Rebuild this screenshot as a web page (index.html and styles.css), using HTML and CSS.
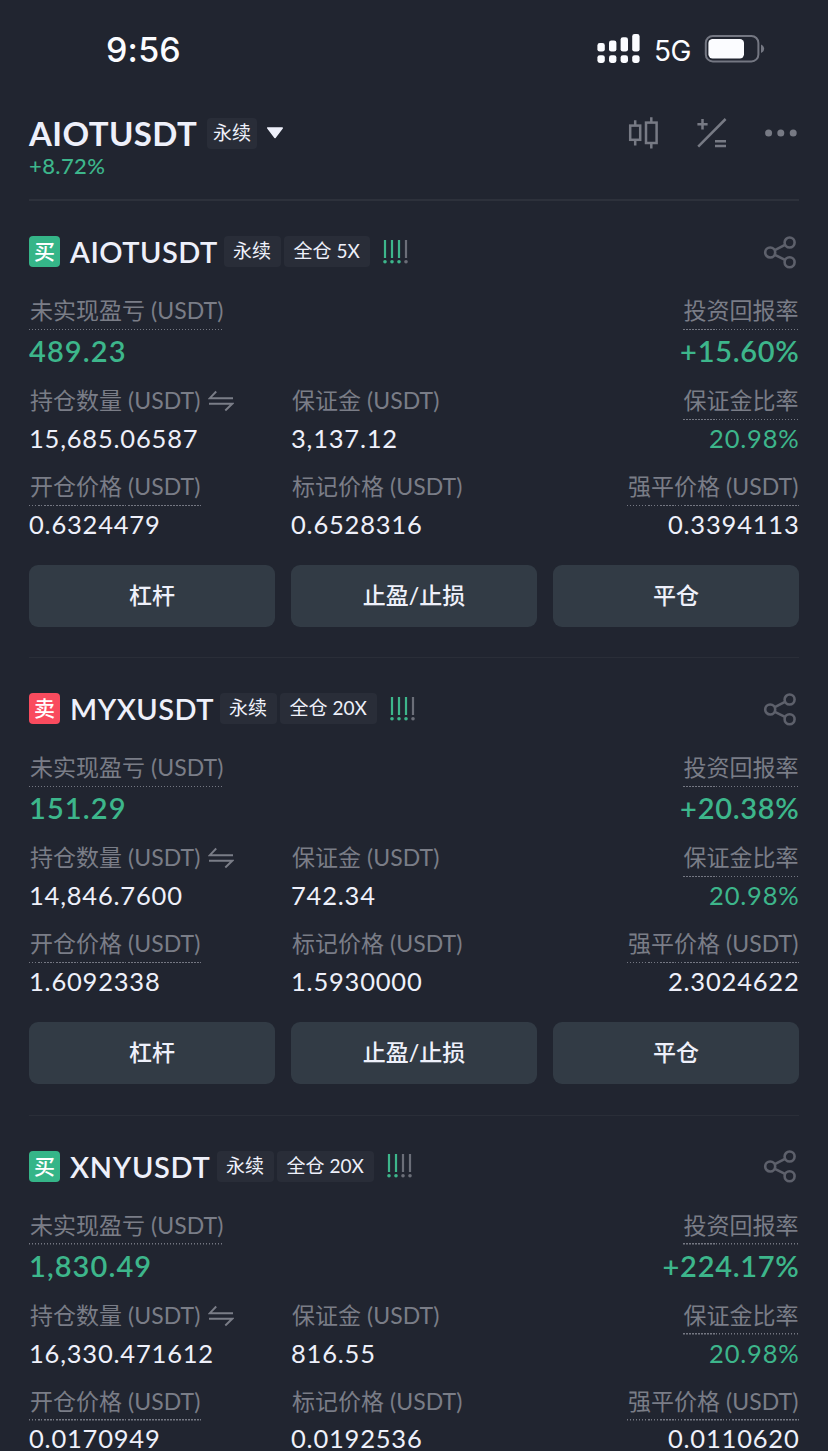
FILE: index.html
```html
<!DOCTYPE html>
<html lang="zh-CN">
<head>
<meta charset="utf-8">
<title>AIOTUSDT</title>
<link rel="stylesheet" href="styles.css">
</head>
<body>
<svg class="defs" width="0" height="0">
  <symbol id="share" viewBox="0 0 34 34">
    <g fill="none" stroke="currentColor" stroke-width="2.6"><circle cx="7.2" cy="17.5" r="5"/><circle cx="26.6" cy="7.5" r="5"/><circle cx="26.6" cy="27.2" r="5"/><path d="M11.8 15.1 22 9.8M11.8 19.8 22 24.9"/></g>
  </symbol>
  <symbol id="swap" viewBox="0 0 26 24">
    <path d="M25 9.2H1.8L8.2 2.5M1 14.8H24.2L17.3 21.5" fill="none" stroke="currentColor" stroke-width="1.9"/>
  </symbol>
  <symbol id="bar" viewBox="0 0 4 24">
    <path d="M2 0V18" stroke="currentColor" stroke-width="2.2"/><circle cx="2" cy="21.8" r="1.8" fill="currentColor"/>
  </symbol>
</svg>

<header class="status">
  <span class="clock">9:56</span>
  <div class="status-right">
    <svg class="signal" width="44" height="30" viewBox="0 0 44 30" fill="#fbfcff"><rect x=".4" y="9" width="7.4" height="8.6" rx="2.4"/><rect x="12" y="6.4" width="7.4" height="11.2" rx="2.4"/><rect x="23.6" y="3.2" width="7.4" height="14.4" rx="2.4"/><rect x="35.2" y="0" width="7.4" height="17.6" rx="2.4"/><rect x=".4" y="21.2" width="7.4" height="7.8" rx="2.4"/><rect x="12" y="21.2" width="7.4" height="7.8" rx="2.4"/><rect x="23.6" y="21.2" width="7.4" height="7.8" rx="2.4"/><rect x="35.2" y="21.2" width="7.4" height="7.8" rx="2.4"/></svg>
    <span class="net">5G</span>
    <svg class="battery" width="62" height="30" viewBox="0 0 62 30"><rect x="1.8" y="2" width="52.6" height="25.4" rx="7" fill="none" stroke="#747782" stroke-width="2"/><rect x="4.4" y="4.9" width="35.6" height="19.6" rx="4.2" fill="#fbfcff"/><path d="M57 10.4Q60.2 12 60.2 14.7T57 19Z" fill="#747782"/></svg>
  </div>
</header>

<section class="pair">
  <div>
    <div class="pair-row"><h1 class="symbol">AIOTUSDT</h1><span class="chip small">永续</span><svg class="caret" width="18" height="12" viewBox="0 0 18 12"><path d="M1.8 1H16.2L9 10.4Z" fill="#eef0fa" stroke="#eef0fa" stroke-width="1.6" stroke-linejoin="round"/></svg></div>
    <div class="change">+8.72%</div>
  </div>
  <nav class="tools">
    <svg width="32" height="34" viewBox="0 0 32 34" fill="none" stroke="currentColor" stroke-width="2.5"><rect x="2.2" y="9.6" width="10" height="14.2"/><path d="M7.2 4.2V9.6M7.2 23.8V29.4"/><rect x="18" y="6.6" width="10.6" height="20.4"/><path d="M23.3 1.2V6.6M23.3 27V32.4"/></svg>
    <svg width="32" height="34" viewBox="0 0 32 34" fill="none" stroke="currentColor" stroke-width="2.5"><path d="M2.2 30.6 29.6 3M1.4 8.2H11.6M6.5 3V13.4M19 25.2H30M19 30H30"/></svg>
    <svg width="34" height="10" viewBox="0 0 34 10" fill="currentColor"><circle cx="4.6" cy="5" r="3.5"/><circle cx="16.8" cy="5" r="3.5"/><circle cx="29.2" cy="5" r="3.5"/></svg>
  </nav>
</section>

<main>
  <article class="card">
    <div class="head"><span class="side buy">买</span><h2 class="name aiot">AIOTUSDT</h2><span class="chip">永续</span><span class="chip">全仓 5X</span><span class="risk"><svg><use href="#bar"/></svg><svg><use href="#bar"/></svg><svg><use href="#bar"/></svg><svg class="off"><use href="#bar"/></svg></span><svg class="share"><use href="#share"/></svg></div>
    <div class="row top"><div><span class="label hint">未实现盈亏 <i>(USDT)</i></span><b class="value">489.23</b></div><div></div><div><span class="label hint">投资回报率</span><b class="value">+15.60%</b></div></div>
    <div class="row"><div><span class="label">持仓数量 <i>(USDT)</i><svg class="swap"><use href="#swap"/></svg></span><span class="value">15,685.06587</span></div><div><span class="label">保证金 <i>(USDT)</i></span><span class="value">3,137.12</span></div><div><span class="label hint">保证金比率</span><span class="value up">20.98%</span></div></div>
    <div class="row last"><div><span class="label hint">开仓价格 <i>(USDT)</i></span><span class="value">0.6324479</span></div><div><span class="label">标记价格 <i>(USDT)</i></span><span class="value">0.6528316</span></div><div><span class="label hint">强平价格 <i>(USDT)</i></span><span class="value">0.3394113</span></div></div>
    <div class="actions"><button>杠杆</button><button>止盈/止损</button><button>平仓</button></div>
  </article>

  <article class="card">
    <div class="head"><span class="side sell">卖</span><h2 class="name myx">MYXUSDT</h2><span class="chip">永续</span><span class="chip">全仓 20X</span><span class="risk"><svg><use href="#bar"/></svg><svg><use href="#bar"/></svg><svg><use href="#bar"/></svg><svg class="off"><use href="#bar"/></svg></span><svg class="share"><use href="#share"/></svg></div>
    <div class="row top"><div><span class="label hint">未实现盈亏 <i>(USDT)</i></span><b class="value">151.29</b></div><div></div><div><span class="label hint">投资回报率</span><b class="value">+20.38%</b></div></div>
    <div class="row"><div><span class="label">持仓数量 <i>(USDT)</i><svg class="swap"><use href="#swap"/></svg></span><span class="value">14,846.7600</span></div><div><span class="label">保证金 <i>(USDT)</i></span><span class="value">742.34</span></div><div><span class="label hint">保证金比率</span><span class="value up">20.98%</span></div></div>
    <div class="row last"><div><span class="label hint">开仓价格 <i>(USDT)</i></span><span class="value">1.6092338</span></div><div><span class="label">标记价格 <i>(USDT)</i></span><span class="value">1.5930000</span></div><div><span class="label hint">强平价格 <i>(USDT)</i></span><span class="value">2.3024622</span></div></div>
    <div class="actions"><button>杠杆</button><button>止盈/止损</button><button>平仓</button></div>
  </article>

  <article class="card open">
    <div class="head"><span class="side buy">买</span><h2 class="name xny">XNYUSDT</h2><span class="chip">永续</span><span class="chip">全仓 20X</span><span class="risk"><svg><use href="#bar"/></svg><svg><use href="#bar"/></svg><svg class="off"><use href="#bar"/></svg><svg class="off"><use href="#bar"/></svg></span><svg class="share"><use href="#share"/></svg></div>
    <div class="row top"><div><span class="label hint">未实现盈亏 <i>(USDT)</i></span><b class="value">1,830.49</b></div><div></div><div><span class="label hint">投资回报率</span><b class="value">+224.17%</b></div></div>
    <div class="row"><div><span class="label">持仓数量 <i>(USDT)</i><svg class="swap"><use href="#swap"/></svg></span><span class="value">16,330.471612</span></div><div><span class="label">保证金 <i>(USDT)</i></span><span class="value">816.55</span></div><div><span class="label hint">保证金比率</span><span class="value up">20.98%</span></div></div>
    <div class="row last"><div><span class="label hint">开仓价格 <i>(USDT)</i></span><span class="value">0.0170949</span></div><div><span class="label">标记价格 <i>(USDT)</i></span><span class="value">0.0192536</span></div><div><span class="label hint">强平价格 <i>(USDT)</i></span><span class="value">0.0110620</span></div></div>
  </article>
</main>
</body>
</html>
```
FILE: styles.css
```css
* { box-sizing: border-box; }
html, body { height: 1451px; overflow: hidden; }
body {
  margin: 0;
  background: #212530;
  color: #eef0fa;
  font-family: Lato, "Noto Sans CJK SC", sans-serif;
}
.defs { position: absolute; }
svg { display: block; flex: none; }
h1, h2 { margin: 0; }

.status {
  display: flex;
  justify-content: space-between;
  height: 98px;
  padding: 0 62px 0 106px;
  font-family: Inter, sans-serif;
  color: #fbfcff;
}
.clock { font-size: 34px; line-height: 99px; font-weight: 500; letter-spacing: .2px; }
.status-right { display: flex; align-items: center; height: 97px; }
.signal { margin-right: 1px; }
.net { width: 38px; margin: 5px 12px 0 12px; font-size: 28px; font-weight: 400; letter-spacing: -.4px; }

.pair {
  display: flex;
  justify-content: space-between;
  height: 103px;
  margin: 0 29px;
  padding-top: 17px;
  border-bottom: 2px solid #2d313b;
}
.pair-row { display: flex; align-items: center; height: 36px; }
.symbol { width: 178px; font-size: 33px; font-weight: 700; line-height: 36px; letter-spacing: .4px; white-space: nowrap; }
.caret { margin-left: 9px; }
.change { font-size: 22px; line-height: 30px; letter-spacing: .4px; color: #3db68b; font-weight: 500; }
.tools { display: flex; align-items: center; gap: 36px; height: 36px; margin-right: 1px; color: #777a84; }

.chip {
  height: 31px;
  padding: 0 9.5px;
  border-radius: 4px;
  background: #292d38;
  font-size: 19px;
  line-height: 30px;
  white-space: nowrap;
}
.chip.small { padding: 0 6px; }
.chip + .chip { padding-right: 10.5px; margin-left: 3.5px; }

.card {
  height: 457.3px;
  margin: 0 29px;
  padding-top: 35px;
  border-bottom: 1.5px solid #2a2e38;
}
.card.open { height: auto; border-bottom: 0; }
.head { display: flex; align-items: center; height: 31px; }
.side {
  width: 31px;
  height: 31px;
  margin-right: 10px;
  border-radius: 4px;
  font-size: 21px;
  line-height: 30px;
  font-weight: 500;
  text-align: center;
  color: #fff;
}
.buy { background: #35b588; }
.sell { background: #f94b5e; }
.name { font-size: 29px; font-weight: 600; line-height: 31px; letter-spacing: .5px; white-space: nowrap; }
.aiot { width: 153.5px; }
.myx { width: 149.5px; }
.xny { width: 146.5px; letter-spacing: .7px; }
.risk { display: flex; gap: 3px; margin-left: 12.5px; color: #3db68b; }
.risk svg { width: 4px; height: 24px; }
.risk .off { color: #6b6e78; }
.share { width: 34px; height: 34px; margin-left: auto; margin-right: 2px; color: #5d606b; }

.row { display: grid; grid-template-columns: repeat(3, 1fr); column-gap: 16px; height: 86px; }
.row.top { height: 90px; margin-top: 29px; }
.row.last { height: 92.5px; }
.card.open .row.last { height: auto; }
.row > div { display: flex; flex-direction: column; align-items: flex-start; }
.row > div:last-child { align-items: flex-end; }
.label {
  display: flex;
  height: 34px;
  padding: 0 .5px 0 1px;
  font-size: 23px;
  line-height: 29px;
  color: #7a7d87;
  white-space: pre;
}
.label i { font-style: normal; letter-spacing: .1px; }
.hint {
  background: repeating-linear-gradient(90deg, #747782 0 1.5px, transparent 1.5px 3px) bottom / 100% 1.5px no-repeat;
}
.swap { width: 26px; height: 24px; margin: 3px 0 0 8px; }
.value { font-size: 25.5px; line-height: 37px; height: 37px; letter-spacing: .8px; white-space: nowrap; }
.row > div:last-child .value { margin-right: -.5px; }
b.value { font-size: 29px; line-height: 42px; font-weight: 600; letter-spacing: 1.1px; color: #3db68b; }
.row > div:last-child b.value { letter-spacing: .7px; }
.card.open .row.last .value { height: 29px; line-height: 35px; }
.up { color: #3db68b; }

.actions { display: grid; grid-template-columns: repeat(3, 1fr); gap: 16px; }
.actions button {
  height: 62px;
  padding: 0 0 2px;
  border: 0;
  border-radius: 9px;
  background: #323b45;
  color: #eef0fa;
  font: 500 23px/60px Lato, "Noto Sans CJK SC", sans-serif;
}
```
